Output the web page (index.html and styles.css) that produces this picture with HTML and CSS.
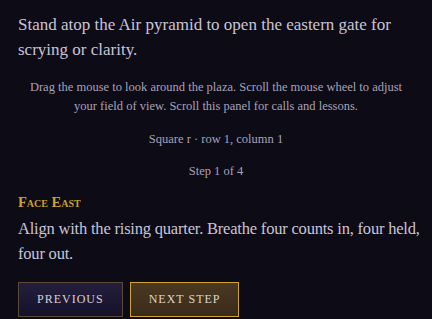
FILE: index.html
```html
<!DOCTYPE html>
<html lang="en">
<head>
    <meta charset="UTF-8">
    <meta name="viewport" content="width=device-width, initial-scale=1.0">
    <title>Air Pyramid</title>
    <link rel="stylesheet" href="styles.css">
</head>
<body>
    <div id="panel">
        <p class="intro">Stand atop the Air pyramid to open the eastern gate for scrying or clarity.</p>

        <p class="hint help">Drag the mouse to look around the plaza. Scroll the mouse wheel to adjust your field of view. Scroll this panel for calls and lessons.</p>

        <p class="hint square">Square r &middot; row 1, column 1</p>
        <p class="hint stepCount">Step 1 of 4</p>

        <h2 class="stepTitle">Face East</h2>
        <p class="stepText">Align with the rising quarter. Breathe four counts in, four held, four out.</p>

        <div class="controls">
            <button class="btn prev">Previous</button>
            <button class="btn next">Next Step</button>
        </div>
    </div>
</body>
</html>
```

FILE: styles.css
```css
html {
    font-family: 'Liberation Serif', serif;
}

body {
    margin: 0;
    background: #0c0b16;
    color: #cbc4d8;
    height: 319px;
    overflow: hidden;
}

#panel {
    padding: 12px 12px 0 18px;
}

p {
    margin: 0;
}

.intro {
    font-size: 17px;
    line-height: 25px;
}

.hint {
    font-size: 12.5px;
    line-height: 19px;
    color: #a9a2b9;
    text-align: center;
    padding-right: 6px;
}

.help {
    margin-top: 16px;
}

.square {
    margin-top: 14px;
}

.stepCount {
    margin-top: 13px;
}

.stepTitle {
    font-variant: small-caps;
    font-size: 14.5px;
    font-weight: bold;
    color: #caa22c;
    margin: 13px 0 0;
}

.stepText {
    font-size: 16.5px;
    line-height: 25px;
    margin-top: 5px;
    letter-spacing: -0.2px;
}

.controls {
    display: flex;
    gap: 8px;
    margin-top: 16px;
}

.btn {
    font-family: 'Liberation Serif', serif;
    font-size: 12px;
    letter-spacing: 1px;
    text-transform: uppercase;
    color: #d6d0dc;
    height: 35px;
    padding: 0 18px;
    cursor: pointer;
}

.prev {
    background: linear-gradient(180deg, #241e3c, #15122a);
    border: 1px solid #5b4a36;
}

.next {
    background: linear-gradient(180deg, #4a3820, #3b2b1b);
    border: 1px solid #cfa435;
    color: #ddd5cc;
    margin-left: -1px;
}
```
